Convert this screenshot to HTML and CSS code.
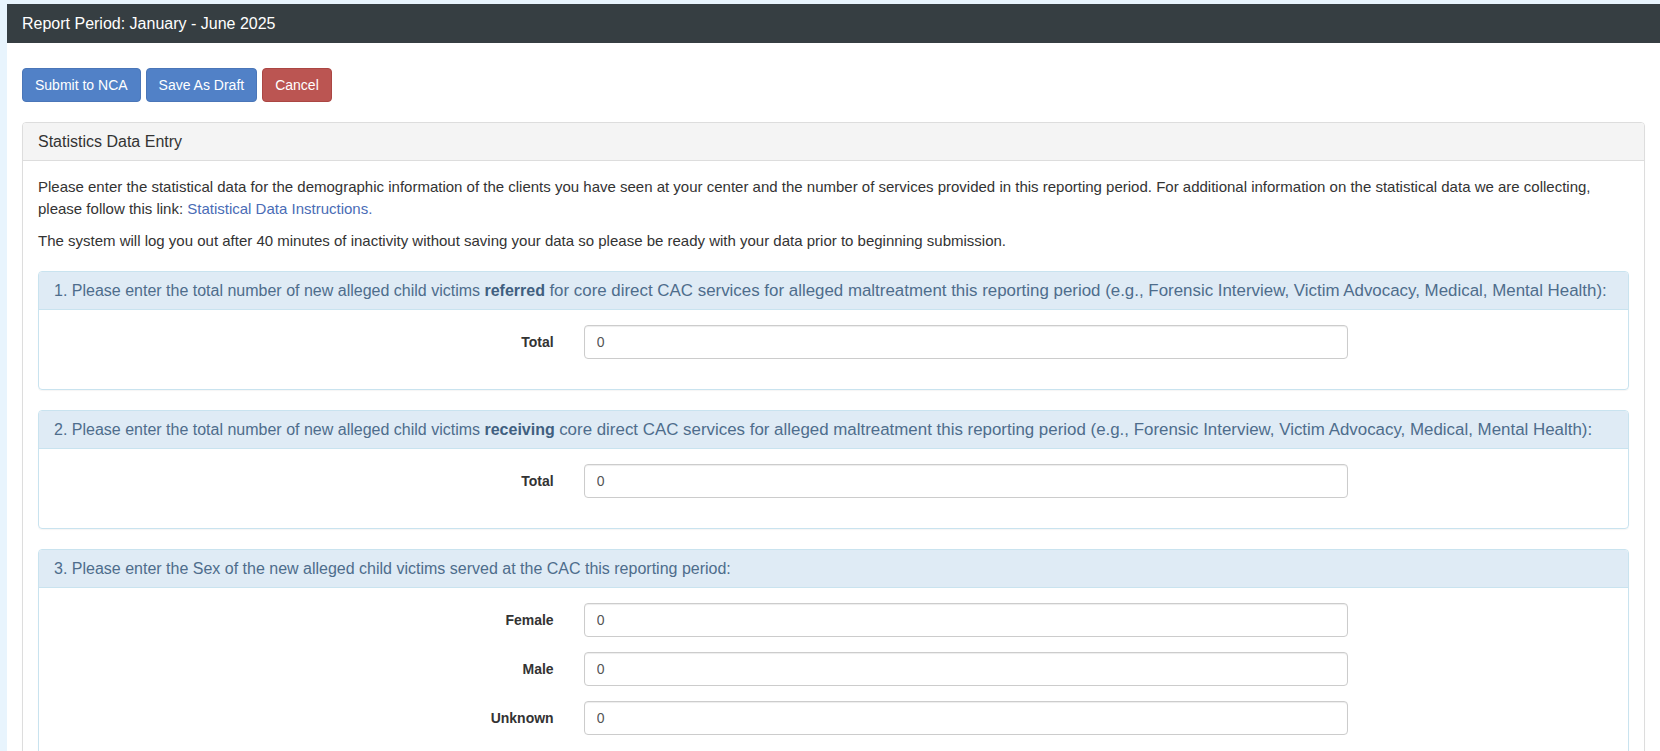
FILE: index.html
```html
<!DOCTYPE html>
<html lang="en">
<head>
  <meta charset="UTF-8">
  <meta name="viewport" content="width=device-width, initial-scale=1.0">
  <title>Statistics Data Entry</title>
  <link rel="stylesheet" href="styles.css">
</head>
<body>
  <div class="page">
    <div class="topbar">Report Period: January - June 2025</div>

    <div class="content">
      <div class="actions">
        <button class="btn btn-primary">Submit to NCA</button>
        <button class="btn btn-primary">Save As Draft</button>
        <button class="btn btn-danger">Cancel</button>
      </div>

      <div class="panel">
        <div class="panel-heading">Statistics Data Entry</div>
        <div class="panel-body">
          <p>Please enter the statistical data for the demographic information of the clients you have seen at your center and the number of services provided in this reporting period. For additional information on the statistical data we are collecting, please follow this link: <a href="#">Statistical Data Instructions.</a></p>
          <p class="last">The system will log you out after 40 minutes of inactivity without saving your data so please be ready with your data prior to beginning submission.</p>

          <!-- вопрос 1 -->
          <div class="question">
            <div class="question-heading">1. Please enter the total number of new alleged child victims <b>referred</b> <span class="q-rest">for core direct CAC services for alleged maltreatment this reporting period (e.g., Forensic Interview, Victim Advocacy, Medical, Mental Health):</span></div>
            <div class="question-body">
              <div class="field">
                <label>Total</label>
                <input type="text" value="0">
              </div>
            </div>
          </div>

          <!-- вопрос 2 -->
          <div class="question">
            <div class="question-heading">2. Please enter the total number of new alleged child victims <b>receiving</b> <span class="q-rest">core direct CAC services for alleged maltreatment this reporting period (e.g., Forensic Interview, Victim Advocacy, Medical, Mental Health):</span></div>
            <div class="question-body">
              <div class="field">
                <label>Total</label>
                <input type="text" value="0">
              </div>
            </div>
          </div>

          <!-- вопрос 3 -->
          <div class="question">
            <div class="question-heading">3. Please enter the Sex of the new alleged child victims served at the CAC this reporting period:</div>
            <div class="question-body">
              <div class="field">
                <label>Female</label>
                <input type="text" value="0">
              </div>
              <div class="field">
                <label>Male</label>
                <input type="text" value="0">
              </div>
              <div class="field">
                <label>Unknown</label>
                <input type="text" value="0">
              </div>
            </div>
          </div>
        </div>
      </div>
    </div>
  </div>
</body>
</html>
```

FILE: styles.css
```css
html, body {
  height: 100%;
}
body {
  margin: 0;
  padding: 4px 0 0 7px;
  background-color: #e8f4fd;
  font-family: "Liberation Sans", Arial, sans-serif;
  font-size: 14px;
  line-height: 1.42857;
  color: #333;
  overflow: hidden;
}
.page {
  background: white;
  min-height: 100%;
}
.topbar {
  background-color: #363e42;
  color: white;
  font-size: 16px;
  line-height: 19px;
  padding: 10px 15px;
}
.content {
  padding: 25px 15px 0;
}
.actions {
  display: flex;
  gap: 5px;
  margin-bottom: 20px;
}
.btn {
  font-family: inherit;
  font-size: 14px;
  line-height: 20px;
  padding: 6px 12px;
  border: 1px solid transparent;
  border-radius: 4px;
  color: white;
  cursor: pointer;
}
.btn-primary {
  background-color: #5181c7;
  border-color: #4a76b8;
}
.btn-danger {
  background-color: #bb5552;
  border-color: #ab4643;
}
.panel {
  border: 1px solid #ddd;
  border-radius: 4px;
  box-shadow: 0 1px 1px rgba(0, 0, 0, 0.05);
}
.panel-heading {
  background-color: #f4f4f4;
  border-bottom: 1px solid #ddd;
  border-radius: 3px 3px 0 0;
  padding: 10px 15px;
  font-size: 16px;
  line-height: 17px;
}
.panel-body {
  padding: 15px;
}
.panel-body p {
  margin: 0 0 10px;
  font-size: 15px;
  line-height: 22px;
}
.panel-body p.last {
  margin-bottom: 19px;
}
.panel-body a {
  color: #4a6cb6;
  text-decoration: none;
}
.question {
  border: 1px solid #c9e3ef;
  border-radius: 4px;
  margin-bottom: 20px;
  box-shadow: 0 1px 1px rgba(0, 0, 0, 0.04);
}
.question-heading {
  background-color: #dfebf5;
  color: #4e6d8c;
  border-bottom: 1px solid #c9e3ef;
  border-radius: 3px 3px 0 0;
  padding: 10px 15px;
  height: 17px;
  font-size: 16px;
  line-height: 17px;
}
.question-heading b {
  color: #3f5f80;
}
.q-rest {
  font-size: 16.9px;
}
.question-body {
  padding: 15px;
}
.field {
  display: grid;
  grid-template-columns: 4fr 6fr 2fr;
  margin: 0 -15px 15px;
}
.field label {
  text-align: right;
  font-weight: bold;
  padding: 7px 15px 0;
  line-height: 20px;
}
.field input {
  margin: 0 15px;
  height: 34px;
  box-sizing: border-box;
  padding: 6px 12px;
  font-family: inherit;
  font-size: 14px;
  color: #555;
  border: 1px solid #ccc;
  border-radius: 4px;
  box-shadow: inset 0 1px 1px rgba(0, 0, 0, 0.075);
}
```
